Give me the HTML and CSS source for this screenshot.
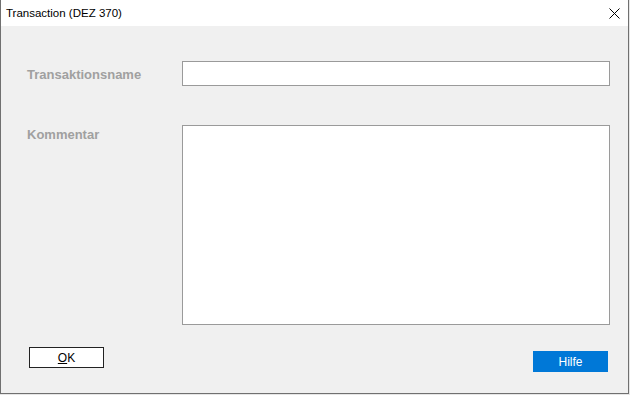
FILE: index.html
```html
<!DOCTYPE html>
<html lang="de">
<head>
  <meta charset="UTF-8">
  <title>Transaction (DEZ 370)</title>
  <link rel="stylesheet" href="styles.css">
</head>
<body>
  <div class="window">
    <div class="titlebar">
      <span class="title">Transaction (DEZ 370)</span>
      <span class="close">
        <svg width="11" height="11" viewBox="0 0 11 11">
          <path d="M0.5 0.5 L10.5 10.5 M10.5 0.5 L0.5 10.5" stroke="#000" stroke-width="1" fill="none"/>
        </svg>
      </span>
    </div>

    <div class="content">
      <div class="row">
        <label class="label" for="name">Transaktionsname</label>
        <input class="field" id="name" type="text">
      </div>
      <div class="row row-top">
        <label class="label label-top" for="comment">Kommentar</label>
        <textarea class="field area" id="comment"></textarea>
      </div>
      <div class="buttons">
        <button class="btn btn-ok"><u>O</u>K</button>
        <button class="btn btn-help">Hilfe</button>
      </div>
    </div>
  </div>
</body>
</html>
```

FILE: styles.css
```css
body {
  margin: 0;
  padding: 0;
  background: #e6e6e6;
  font-family: "Liberation Sans", Arial, sans-serif;
}

.window {
  width: 629px;
  height: 394px;
  box-sizing: border-box;
  border: 1px solid #707070;
  border-top: none;
  background: #f0f0f0;
  display: flex;
  flex-direction: column;
}

.titlebar {
  height: 26px;
  background: #fff;
  display: flex;
  align-items: center;
  justify-content: space-between;
  padding: 0 8px 0 5px;
  box-sizing: border-box;
}

.title {
  font-size: 11.5px;
  color: #000;
  margin-top: -1px;
}

.close {
  display: flex;
  margin-top: 1px;
}

.content {
  flex: 1;
  display: flex;
  flex-direction: column;
  padding: 35px 18px 0 26px;
}

.row {
  display: flex;
  align-items: center;
}

.row-top {
  align-items: flex-start;
  margin-top: 39px;
}

.label {
  width: 155px;
  font-size: 13px;
  font-weight: bold;
  color: #a0a0a0;
  padding-top: 2px;
}

.label-top {
  padding-top: 2px;
}

.field {
  width: 428px;
  height: 25px;
  box-sizing: border-box;
  border: 1px solid #9a9a9a;
  background: #fff;
  margin: 0;
  padding: 2px 4px;
  font-family: inherit;
  font-size: 12px;
  outline: none;
}

.area {
  height: 200px;
  resize: none;
}

.buttons {
  display: flex;
  justify-content: space-between;
  align-items: flex-start;
  margin-top: 22px;
  padding: 0 2px 0 2px;
}

.btn {
  width: 75px;
  height: 21px;
  box-sizing: border-box;
  font-family: inherit;
  font-size: 12px;
  padding: 0;
  margin: 0;
  cursor: pointer;
}

.btn-ok {
  background: #fff;
  border: 1px solid #222;
  color: #000;
}

.btn-help {
  margin-top: 4px;
  background: #0078d7;
  border: none;
  color: #fff;
}
```
